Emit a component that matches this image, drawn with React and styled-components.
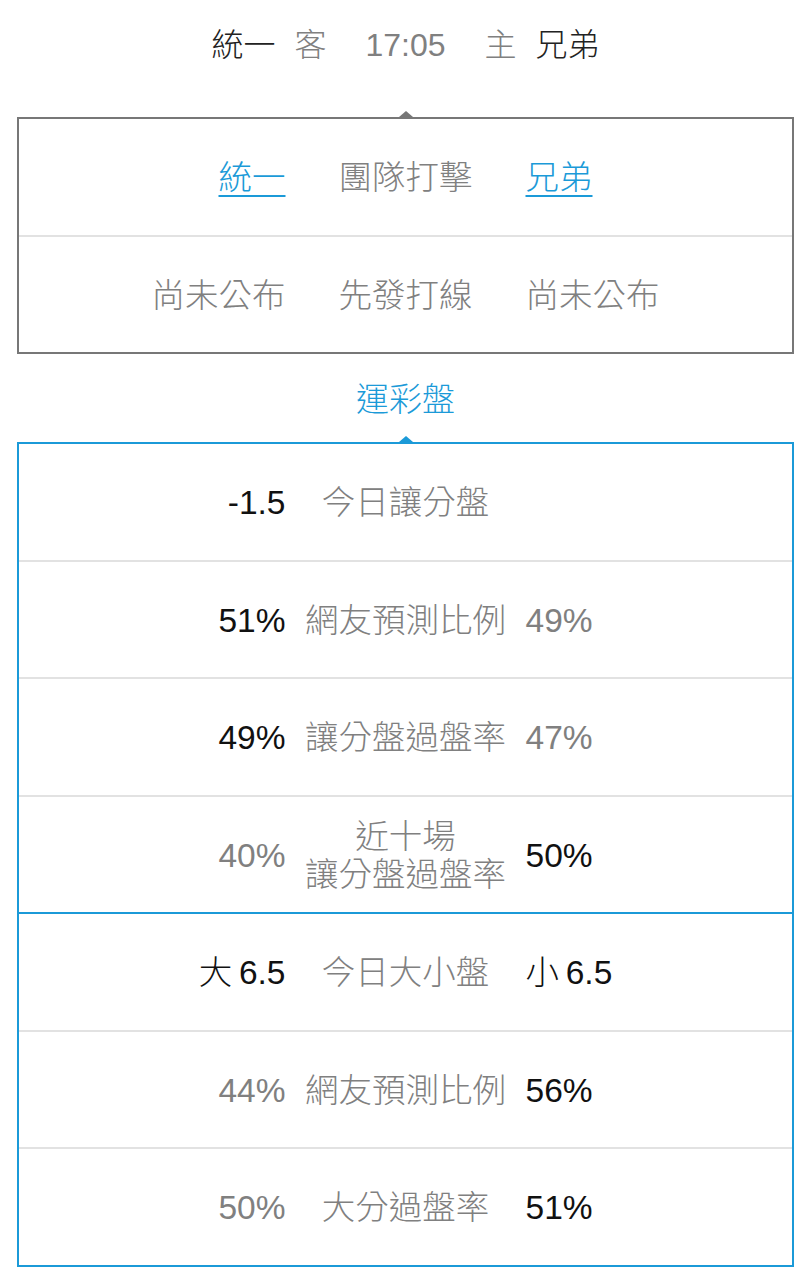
import React from 'react'
import styled, { createGlobalStyle } from 'styled-components'

const BLUE = '#1b9ad8'
const GRAY = '#808080'
const DARK = '#111'

const Global = createGlobalStyle`
  body {
    margin: 0;
    background: #fff;
    font-family: "Liberation Sans", "Noto Sans CJK TC", sans-serif;
    font-weight: 300;
  }
`

const Page = styled.div`
  padding: 0 17px;
`

const Header = styled.div`
  height: 90px;
  margin-bottom: 27px;
  display: flex;
  align-items: center;
  justify-content: center;
  gap: 39px;
  font-size: 32px;
  line-height: 38px;
`

const Side = styled.div`
  display: flex;
  gap: 19px;
`

const Word = styled.span`
  color: ${p => (p.$dark ? '#222' : GRAY)};
`

const Box = styled.div`
  position: relative;
  border: 2px solid ${p => p.$color};

  &::before {
    content: '';
    position: absolute;
    left: 50%;
    top: -8px;
    transform: translateX(-50%);
    border-left: 7px solid transparent;
    border-right: 7px solid transparent;
    border-bottom: 6px solid ${p => p.$color};
  }
`

const Row = styled.div`
  height: 115.5px;
  display: grid;
  grid-template-columns: 1fr 204px 1fr;
  column-gap: 18px;
  align-items: center;
  font-size: 33.5px;
  line-height: 38px;
  border-top: 2px solid ${p => (p.$strong ? BLUE : '#e2e2e2')};

  &:first-child {
    border-top: none;
  }
`

const Left = styled.div`
  text-align: right;
  color: ${p => (p.$dark ? DARK : GRAY)};
  white-space: nowrap;
  padding-top: 3px;
`

const Right = styled.div`
  text-align: left;
  color: ${p => (p.$dark ? DARK : GRAY)};
  white-space: nowrap;
  padding-top: 3px;
`

const Center = styled.div`
  text-align: center;
  color: ${GRAY};
  white-space: nowrap;
  padding-top: 3px;
`

const Team = styled.span`
  color: ${BLUE};
  text-decoration: underline;
  text-decoration-thickness: 2px;
  text-underline-offset: 6px;
`

const Title = styled.div`
  height: 88px;
  display: flex;
  align-items: center;
  justify-content: center;
  color: ${BLUE};
  font-size: 33px;
  line-height: 38px;
  padding-top: 3px;
  box-sizing: border-box;
`

const odds = [
  { l: '-1.5', ld: true, c: '今日讓分盤', r: '' },
  { l: '51%', ld: true, c: '網友預測比例', r: '49%' },
  { l: '49%', ld: true, c: '讓分盤過盤率', r: '47%' },
  { l: '40%', c: ['近十場', '讓分盤過盤率'], r: '50%', rd: true },
  { l: '大\u20096.5', ld: true, c: '今日大小盤', r: '小\u20096.5', rd: true, strong: true },
  { l: '44%', c: '網友預測比例', r: '56%', rd: true },
  { l: '50%', c: '大分過盤率', r: '51%', rd: true },
]

export default function App() {
  return (
    <Page>
      <Global />
      <Header>
        <Side>
          <Word $dark>統一</Word>
          <Word>客</Word>
        </Side>
        <Word>17:05</Word>
        <Side>
          <Word>主</Word>
          <Word $dark>兄弟</Word>
        </Side>
      </Header>

      <Box $color="#777">
        <Row>
          <Left><Team>統一</Team></Left>
          <Center>團隊打擊</Center>
          <Right><Team>兄弟</Team></Right>
        </Row>
        <Row>
          <Left>尚未公布</Left>
          <Center>先發打線</Center>
          <Right>尚未公布</Right>
        </Row>
      </Box>

      <Title>運彩盤</Title>

      <Box $color={BLUE}>
        {odds.map((o, i) => (
          <Row key={i} $strong={o.strong}>
            <Left $dark={o.ld}>{o.l}</Left>
            <Center>
              {Array.isArray(o.c) ? o.c.map(t => <div key={t}>{t}</div>) : o.c}
            </Center>
            <Right $dark={o.rd}>{o.r}</Right>
          </Row>
        ))}
      </Box>
    </Page>
  )
}
